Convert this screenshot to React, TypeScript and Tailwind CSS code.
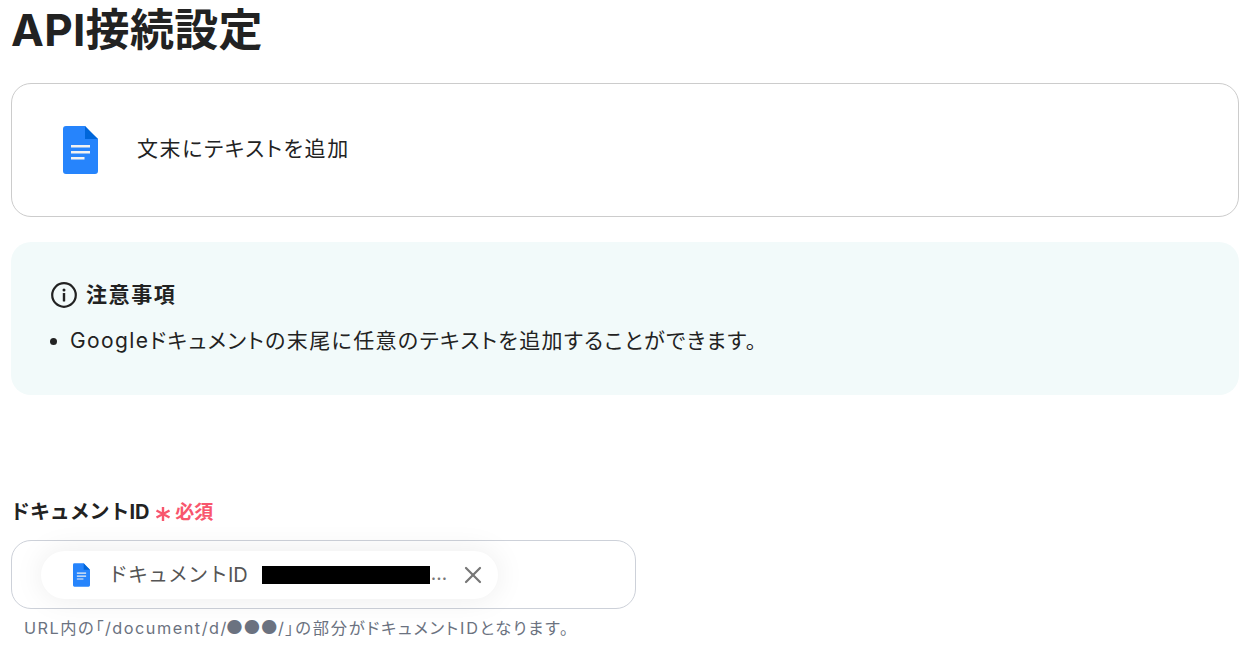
import React from 'react';
import { X } from 'lucide-react';

const FONT = { fontFamily: 'Inter, "Noto Sans CJK JP", sans-serif' };

const DocIcon: React.FC<{ className?: string }> = ({ className }) => (
    <svg className={className} viewBox="0 0 35 48" fill="none">
        <path d="M22 0H3a3 3 0 0 0-3 3v42a3 3 0 0 0 3 3h29a3 3 0 0 0 3-3V13L28 7z" fill="#2684FC" />
        <path d="M22 0l13 13H22z" fill="#0066DA" />
        <path d="M8 19h19v2.4H8zM8 25h19v2.4H8zM8 31h13.5v2.4H8z" fill="#F1F1F1" />
    </svg>
);

const InfoIcon: React.FC = () => (
    <svg className="h-[28px] w-[28px]" viewBox="0 0 28 28" fill="none">
        <circle cx="14" cy="14" r="11.8" stroke="#222" strokeWidth="2.2" />
        <circle cx="14" cy="9" r="1.5" fill="#222" />
        <rect x="12.8" y="12" width="2.4" height="8.5" rx="0.6" fill="#222" />
    </svg>
);

const App: React.FC = () => {
    return (
        <div className="h-[646px] w-[1248px] overflow-hidden bg-white pl-[11px] text-[#222]" style={FONT}>
            <h1 className="mt-[3px] h-[54px] text-[44px] font-bold leading-[54px] tracking-[0.3px]">API接続設定</h1>

            <div className="mt-[26px] flex h-[134px] w-[1228px] items-center rounded-[20px] border border-[#ccc] pl-[51px]">
                <DocIcon className="h-[48px] w-[35px]" />
                <span className="mb-[2px] ml-[39px] text-[21px] tracking-[1.6px] [font-feature-settings:'palt']">文末にテキストを追加</span>
            </div>

            <div className="mt-[25px] h-[153px] w-[1228px] rounded-[20px] bg-[#f2fafa] pl-[39px] pt-[38px]">
                <div className="flex h-[30px] items-center gap-[8px]">
                    <InfoIcon />
                    <span className="text-[21px] font-bold leading-[30px] tracking-[1.6px] [font-feature-settings:'palt']">注意事項</span>
                </div>
                <ul className="mt-[16px] list-disc pl-[20px] text-[21px] leading-[30px] tracking-[1.4px] [font-feature-settings:'palt']">
                    <li>Googleドキュメントの末尾に任意のテキストを追加することができます。</li>
                </ul>
            </div>

            <div className="mt-[102px] flex h-[30px] items-center">
                <span className="-ml-[1px] text-[20px] font-bold -tracking-[0.1px]">ドキュメントID</span>
                <svg className="ml-[6px] mt-[3px] h-[16px] w-[16px]" viewBox="0 0 16 16" fill="none" stroke="#f8566d" strokeWidth="2.4">
                    <path d="M8 1v14M1.5 4.5l13 7M14.5 4.5l-13 7" />
                </svg>
                <span className="ml-[4px] mt-[3px] text-[19px] font-bold text-[#f8566d]">必須</span>
            </div>

            <div className="mt-[13px] flex h-[69px] w-[625px] items-center rounded-[20px] border border-[#cdd1d9] pl-[29px]">
                <div className="flex h-[48px] w-[457px] items-center rounded-full bg-white pl-[32px] shadow-[0_0_30px_rgba(0,0,0,0.08)]">
                    <DocIcon className="h-[24px] w-[17px]" />
                    <span className="ml-[18px] text-[20px] text-[#555]">ドキュメントID</span>
                    <span className="ml-[14px] h-[18px] w-[168px] bg-black" />
                    <span className="ml-[1px] text-[19px] text-[#777]">…</span>
                    <X className="ml-[12px] h-[28px] w-[28px] text-[#777]" strokeWidth={1.9} />
                </div>
            </div>

            <p className="mt-[7px] pl-[13px] text-[16.3px] leading-[24px] tracking-[1.5px] text-[#6b7280] [font-feature-settings:'palt']">
                URL内の「/document/d/<span className="-ml-[2px] text-[19px] leading-[19px] tracking-[0px]">●●●</span>/<span className="tracking-[1.75px]">」の部分がドキュメントIDとなります。</span>
            </p>
        </div>
    );
};

export default App;
